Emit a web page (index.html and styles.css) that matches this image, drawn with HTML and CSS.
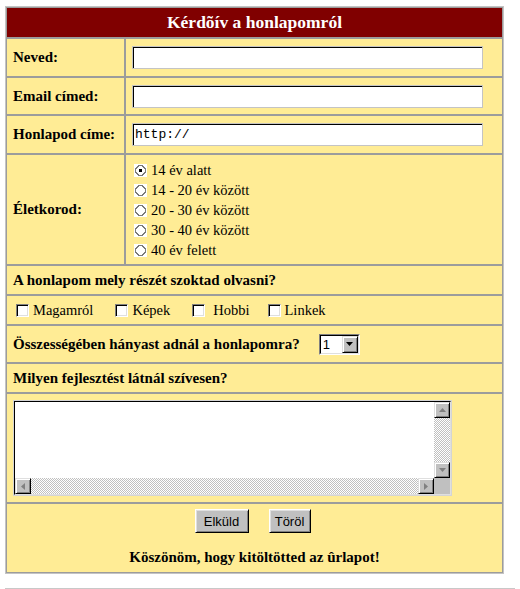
FILE: index.html
```html
<!DOCTYPE html>
<html lang="hu">
<head>
<meta charset="utf-8">
<title>Kérdőív a honlapomról</title>
<link rel="stylesheet" href="styles.css">
</head>
<body>
<form class="survey">
  <div class="cell head">Kérdõív a honlapomról</div>

  <div class="cell lbl">Neved:</div>
  <div class="cell val"><input class="txt" type="text"></div>

  <div class="cell lbl">Email címed:</div>
  <div class="cell val"><input class="txt" type="text"></div>

  <div class="cell lbl">Honlapod címe:</div>
  <div class="cell val"><input class="txt mono" type="text" value="http://"></div>

  <div class="cell lbl">Életkorod:</div>
  <div class="cell val radios">
    <label class="opt"><input class="rad" type="radio" name="kor" checked>14 év alatt</label>
    <label class="opt"><input class="rad" type="radio" name="kor">14 - 20 év között</label>
    <label class="opt"><input class="rad" type="radio" name="kor">20 - 30 év között</label>
    <label class="opt"><input class="rad" type="radio" name="kor">30 - 40 év között</label>
    <label class="opt"><input class="rad" type="radio" name="kor">40 év felett</label>
  </div>

  <div class="cell wide q">A honlapom mely részét szoktad olvasni?</div>

  <div class="cell wide checks">
    <label class="chk"><input class="cb" type="checkbox">Magamról</label>
    <label class="chk"><input class="cb" type="checkbox">Képek</label>
    <label class="chk chk-sp"><input class="cb" type="checkbox">Hobbi</label>
    <label class="chk"><input class="cb" type="checkbox">Linkek</label>
  </div>

  <div class="cell wide q">Összességében hányast adnál a honlapomra?
    <span class="sel"><span class="sel-in"><select class="sel-box"><option>1</option><option>2</option><option>3</option><option>4</option><option>5</option></select><span class="sel-btn"><svg width="7" height="4" viewBox="0 0 7 4"><path d="M0 0h7L3.5 4z" fill="#000"/></svg></span></span></span>
  </div>

  <div class="cell wide q">Milyen fejlesztést látnál szívesen?</div>

  <div class="cell wide tarow">
    <div class="ta">
      <div class="ta-in">
        <textarea class="ta-text"></textarea>
        <div class="vbar">
          <span class="sbtn"><svg width="7" height="4" viewBox="0 0 7 4"><path d="M0 4h7L3.5 0z" fill="#808080"/></svg></span>
          <span class="track"></span>
          <span class="sbtn"><svg width="7" height="4" viewBox="0 0 7 4"><path d="M0 0h7L3.5 4z" fill="#808080"/></svg></span>
        </div>
        <div class="hbar">
          <span class="sbtn"><svg width="4" height="7" viewBox="0 0 4 7"><path d="M4 0v7L0 3.5z" fill="#808080"/></svg></span>
          <span class="track"></span>
          <span class="sbtn"><svg width="4" height="7" viewBox="0 0 4 7"><path d="M0 0v7L4 3.5z" fill="#808080"/></svg></span>
        </div>
        <div class="corner"></div>
      </div>
    </div>
  </div>

  <div class="cell wide actions">
    <div class="btns">
      <button class="btn btn-send" type="submit">Elküld</button>
      <button class="btn btn-reset" type="reset">Töröl</button>
    </div>
    <p class="thanks">Köszönöm, hogy kitöltötted az ûrlapot!</p>
  </div>
</form>
<div class="rule"></div>
</body>
</html>
```
FILE: styles.css
```css
html {
  overflow: hidden;
  background: #fff;
}

body {
  margin: 6px 5px 0;
  font-family: "Liberation Serif", "Times New Roman", serif;
  color: #000;
}

.survey {
  display: grid;
  grid-template-columns: 119px 378px;
  grid-template-rows: 31px 39px 38px 39px 111px 30px 30px 38px 30px 110px 70px;
  width: max-content;
  border: 1px solid #c4c4c4;
  background: #ffec95;
  margin: 0;
}

.cell {
  box-sizing: border-box;
  border: 1px solid #9c9c9c;
  display: flex;
  align-items: center;
  min-width: 0;
}

.wide {
  grid-column: 1 / 3;
}

.head {
  grid-column: 1 / 3;
  justify-content: center;
  background: #800000;
  color: #fff;
  font-weight: bold;
  font-size: 17.5px;
}

.lbl,
.q {
  padding-left: 6px;
  font-weight: bold;
  font-size: 15px;
}

.val {
  padding-left: 6px;
}

.txt {
  box-sizing: border-box;
  width: 351px;
  height: 23px;
  margin: 0;
  padding: 0 2px;
  border: 1px solid #c4c4c4;
  box-shadow: inset 1px 1px 0 #000;
  background: #fff;
  outline: none;
  font-family: "Liberation Sans", Arial, sans-serif;
  font-size: 13px;
}

.mono {
  font-family: "Liberation Mono", "Courier New", monospace;
  font-size: 13px;
}

.radios {
  flex-direction: column;
  align-items: flex-start;
  justify-content: center;
  padding-left: 8px;
  padding-top: 1px;
}

.opt {
  display: flex;
  align-items: center;
  height: 20px;
  font-size: 14.5px;
}

.rad {
  appearance: none;
  -webkit-appearance: none;
  width: 13px;
  height: 13px;
  margin: 0 4px 0 0;
  background: radial-gradient(circle at 50% 50%, #fff 0 4.2px, #7a7a7a 4.2px 5.4px, #fff 5.4px);
}

.rad:checked {
  background: radial-gradient(circle at 50% 50%, #000 0 1.8px, #fff 1.8px 4.2px, #7a7a7a 4.2px 5.4px, #fff 5.4px);
}

.checks {
  padding-left: 9px;
  font-size: 14.5px;
}

.chk {
  display: flex;
  align-items: center;
  margin-right: 22px;
}

.chk-sp {
  margin-right: 18px;
}

.chk-sp .cb {
  margin-right: 8px;
}

.cb {
  appearance: none;
  -webkit-appearance: none;
  box-sizing: border-box;
  width: 13px;
  height: 13px;
  margin: 0 4px 0 0;
  background: #fff;
  border: 1px solid;
  border-color: #808080 #fff #fff #808080;
  box-shadow: inset 1px 1px 0 #000, inset -1px -1px 0 #dfdfdf;
}

.sel {
  display: inline-flex;
  margin-left: 19px;
  border: 1px solid;
  border-color: #808080 #fff #fff #808080;
}

.sel-in {
  display: inline-flex;
  align-items: stretch;
  border: 1px solid;
  border-color: #000 #dfdfdf #dfdfdf #000;
  background: #fff;
  height: 17px;
}

.sel-box {
  appearance: none;
  -webkit-appearance: none;
  width: 21px;
  margin: 0;
  padding: 0 0 0 2px;
  border: 0;
  background: #fff;
  font-family: "Liberation Sans", Arial, sans-serif;
  font-size: 13px;
  font-weight: normal;
  outline: none;
}

.sel-btn,
.sbtn {
  box-sizing: border-box;
  width: 16px;
  height: 16px;
  display: flex;
  align-items: center;
  justify-content: center;
  background: #c0c0c0;
  border: 1px solid;
  border-color: #dfdfdf #000 #000 #dfdfdf;
  box-shadow: inset 1px 1px 0 #fff, inset -1px -1px 0 #808080;
}

.sel-btn {
  height: 17px;
}

.tarow {
  padding-left: 6px;
}

.ta {
  box-sizing: border-box;
  width: 439px;
  height: 96px;
  border: 1px solid #d4d4d4;
  display: flex;
}

.ta-in {
  flex: 1;
  display: grid;
  grid-template-columns: 1fr 16px;
  grid-template-rows: 1fr 16px;
  border: 1px solid;
  border-color: #000 #dfdfdf #dfdfdf #000;
  background: #fff;
}

.ta-text {
  border: 0;
  margin: 0;
  padding: 2px;
  resize: none;
  outline: none;
  overflow: hidden;
  background: #fff;
  font-family: "Liberation Mono", "Courier New", monospace;
  font-size: 13px;
}

.vbar {
  display: flex;
  flex-direction: column;
}

.hbar {
  display: flex;
}

.track {
  flex: 1;
  background: repeating-conic-gradient(#c0c0c0 0 25%, #fff 0 50%) 0 0 / 2px 2px;
}

.corner {
  background: #c0c0c0;
}

.actions {
  flex-direction: column;
  justify-content: flex-start;
  padding-top: 5px;
}

.btns {
  display: flex;
  gap: 20px;
  margin-right: 4px;
}

.btn {
  box-sizing: border-box;
  height: 24px;
  margin: 0;
  padding: 0;
  background: #c0c0c0;
  border: 1px solid;
  border-color: #fff #000 #000 #fff;
  box-shadow: inset 1px 1px 0 #dfdfdf, inset -1px -1px 0 #808080;
  font-family: "Liberation Sans", Arial, sans-serif;
  font-size: 13px;
  color: #000;
}

.btn-send {
  width: 54px;
}

.btn-reset {
  width: 42px;
}

.thanks {
  margin: 15px 0 0;
  font-weight: bold;
  font-size: 15px;
  line-height: 18px;
}

.rule {
  height: 1px;
  margin: 14px -5px 0;
  background: #c8c8c8;
}
```
